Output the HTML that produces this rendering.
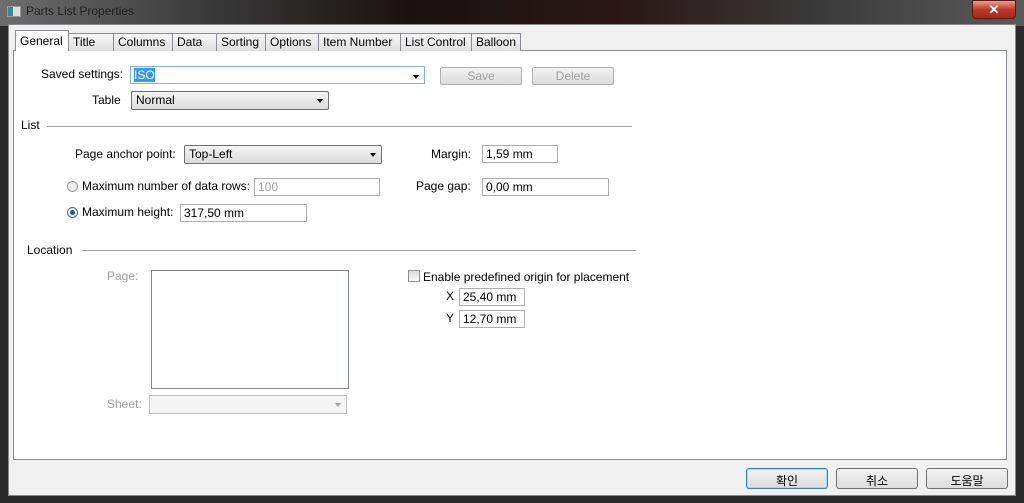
<!DOCTYPE html><html><head><meta charset="utf-8"><style>
*{box-sizing:border-box;margin:0;padding:0}
body{width:1024px;height:503px;overflow:hidden;background:#2a2a2a;font-family:"Liberation Sans","Noto Sans CJK KR",sans-serif;font-size:12px;color:#000;position:relative}
.a{position:absolute}
.title{left:0;top:0;width:1024px;height:26px;background:linear-gradient(90deg,#6d6d6d 0%,#3a3a3a 20%,#1a1212 40%,#2a1616 60%,#3a3a3a 80%,#5a5a5a 100%)}
.frame{left:8px;top:24px;width:1008px;height:472px;background:#f0f0f0;border:1px solid #888}
.panel{left:13px;top:50px;width:994px;height:410px;background:#fff;border:1px solid #898c95}
.tab{top:33px;height:18px;background:linear-gradient(#f6f6f6,#e0e0e0);border:1px solid #898c95;border-bottom:none;padding:1px 4px;font-size:12px}
.tab.sel{top:30px;height:21px;background:#fff;z-index:2;padding-top:3px}
.in{background:#fff;border:1px solid #abadb3;height:18px;padding:1px 3px;font-size:12px}
.dd{background:linear-gradient(#f4f4f4,#dcdcdc);border:1px solid #707070;border-radius:2px;height:19px;padding:1px 4px}
.arr{position:absolute;right:5px;top:7px;width:0;height:0;border-left:3.5px solid transparent;border-right:3.5px solid transparent;border-top:4px solid #000}
.btn{background:linear-gradient(#f2f2f2,#dcdcdc);border:1px solid #707070;border-radius:3px;text-align:center;height:21px;padding-top:3px}
.dis{color:#a0a0a0}
.line{height:1px;background:#a0a0a0}
</style></head><body>
<div class="a title"></div>
<div class="a" style="left:7px;top:6px;width:14px;height:11px;background:#ddd;border:1px solid #999"><div style="width:5px;height:9px;background:#3a8a8a"></div></div>
<div class="a" style="left:26px;top:4px;color:#222;font-size:12px">Parts List Properties</div>
<div class="a" style="left:972px;top:0;width:44px;height:19px;background:linear-gradient(#e8a090,#c0392b 50%,#a02a1a);border:1px solid #5a1a10;border-radius:0 0 4px 4px;color:#fff;text-align:center;font-weight:bold;font-size:13px;line-height:17px">✕</div>
<div class="a frame"></div>
<div class="a panel"></div>
<div class="a tab sel" style="left:15px;width:54px">General</div>
<div class="a tab" style="left:68px;width:46px">Title</div>
<div class="a tab" style="left:113px;width:60px">Columns</div>
<div class="a tab" style="left:172px;width:45px">Data</div>
<div class="a tab" style="left:216px;width:50px">Sorting</div>
<div class="a tab" style="left:265px;width:54px">Options</div>
<div class="a tab" style="left:318px;width:83px">Item Number</div>
<div class="a tab" style="left:400px;width:72px">List Control</div>
<div class="a tab" style="left:471px;width:50px">Balloon</div>

<div class="a" style="left:41px;top:67px">Saved settings:</div>
<div class="a in" style="left:130px;top:66px;width:295px;border-color:#7eb4ea"><span style="background:#3399ff;color:#fff">ISO</span><span class="arr" style="top:8px"></span></div>
<div class="a btn dis" style="left:440px;top:67px;width:82px;height:18px;padding-top:1px;border-color:#adb2b5;border-radius:2px">Save</div>
<div class="a btn dis" style="left:532px;top:67px;width:82px;height:18px;padding-top:1px;border-color:#adb2b5;border-radius:2px">Delete</div>
<div class="a" style="left:92px;top:93px">Table</div>
<div class="a dd" style="left:131px;top:91px;width:198px">Normal<span class="arr"></span></div>

<div class="a" style="left:21px;top:118px">List</div>
<div class="a line" style="left:47px;top:126px;width:585px"></div>
<div class="a" style="left:75px;top:147px">Page anchor point:</div>
<div class="a dd" style="left:184px;top:145px;width:198px">Top-Left<span class="arr"></span></div>
<div class="a" style="left:431px;top:147px">Margin:</div>
<div class="a in" style="left:482px;top:145px;width:76px">1,59 mm</div>
<div class="a" style="left:67px;top:181px;width:11px;height:11px;border:1px solid #999;border-radius:50%;background:#eee"></div>
<div class="a" style="left:82px;top:179px">Maximum number of data rows:</div>
<div class="a in dis" style="left:254px;top:178px;width:126px">100</div>
<div class="a" style="left:416px;top:179px">Page gap:</div>
<div class="a in" style="left:482px;top:178px;width:127px">0,00 mm</div>
<div class="a" style="left:67px;top:207px;width:11px;height:11px;border:1px solid #666;border-radius:50%;background:#eef"><div style="margin:2px;width:5px;height:5px;border-radius:50%;background:#1a5aa0"></div></div>
<div class="a" style="left:82px;top:205px">Maximum height:</div>
<div class="a in" style="left:180px;top:204px;width:127px">317,50 mm</div>

<div class="a" style="left:27px;top:243px">Location</div>
<div class="a line" style="left:82px;top:250px;width:554px"></div>
<div class="a dis" style="left:107px;top:269px">Page:</div>
<div class="a" style="left:151px;top:270px;width:198px;height:119px;border:1px solid #828790;background:#fff"></div>
<div class="a dis" style="left:107px;top:397px">Sheet:</div>
<div class="a" style="left:149px;top:395px;width:198px;height:19px;border:1px solid #c0c0c0;background:#f4f4f4"><span class="arr" style="border-top-color:#a0a0a0"></span></div>
<div class="a" style="left:408px;top:270px;width:12px;height:12px;border:1px solid #8f8f8f;background:linear-gradient(#ddd,#f8f8f8)"></div>
<div class="a" style="left:423px;top:270px">Enable predefined origin for placement</div>
<div class="a" style="left:446px;top:289px">X</div>
<div class="a in" style="left:459px;top:288px;width:66px">25,40 mm</div>
<div class="a" style="left:446px;top:311px">Y</div>
<div class="a in" style="left:459px;top:310px;width:66px">12,70 mm</div>

<div class="a btn" style="left:746px;top:468px;width:82px;border-color:#3c7fb1;box-shadow:inset 0 0 0 1px #9fd8f8">확인</div>
<div class="a btn" style="left:836px;top:468px;width:82px">취소</div>
<div class="a btn" style="left:926px;top:468px;width:82px">도움말</div>
</body></html>
